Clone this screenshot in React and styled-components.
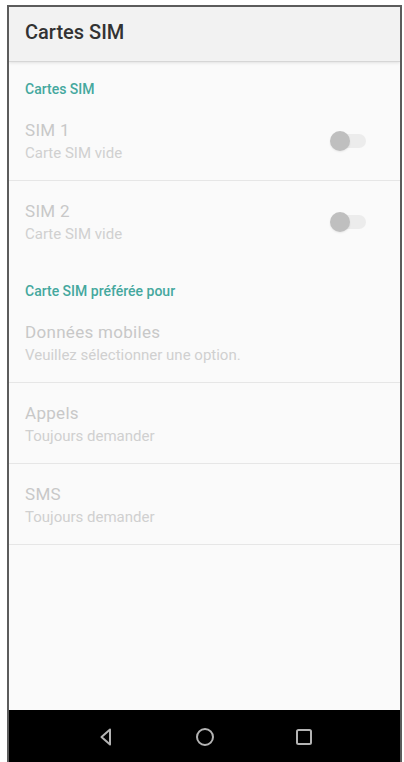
import React from "react";
import styled, { createGlobalStyle } from "styled-components";

const Global = createGlobalStyle`
  html, body { margin: 0; padding: 0; background: #ffffff; }
  body { font-family: Roboto, "Noto Sans", "Liberation Sans", sans-serif; }
  * { box-sizing: border-box; }
`;

const Frame = styled.div`
  margin: 5px 0 0 7px;
  width: 395px;
  height: 757px;
  border: 2px solid #5c5c5c;
  border-bottom: none;
  display: flex;
  flex-direction: column;
  overflow: hidden;
  background: #fafafa;
`;

const Header = styled.header`
  height: 55px;
  flex: none;
  background: #f2f2f2;
  border-bottom: 1px solid #d6d6d6;
  box-shadow: 0 1px 3px rgba(0, 0, 0, 0.1);
  padding: 13px 16px 0;
  position: relative;
  z-index: 1;
`;

const Title = styled.h1`
  margin: 0;
  font-size: 20px;
  line-height: 24px;
  font-weight: 500;
  color: #333333;
`;

const Content = styled.main`
  flex: 1;
  background: #fafafa;
`;

const Category = styled.div`
  padding: ${(p) => (p.$first ? "19px 16px 3px" : "23px 16px 3px")};
  font-size: 14px;
  line-height: 16px;
  font-weight: 500;
  color: #45a89e;
`;

const Row = styled.div`
  display: flex;
  align-items: center;
  padding: 20px 16px 16px;
  border-bottom: ${(p) => (p.$divider ? "1px solid #e6e6e6" : "none")};
  height: ${(p) => (p.$divider ? "81px" : "79px")};
`;

const Texts = styled.div`
  flex: 1;
  display: flex;
  flex-direction: column;
  gap: 4px;
  align-self: flex-start;
`;

const RowTitle = styled.div`
  font-size: 17px;
  line-height: 20px;
  letter-spacing: 0.3px;
  color: #c8c8c8;
`;

const RowSub = styled.div`
  font-size: 15px;
  line-height: 18px;
  color: #d0d0d0;
`;

const Switch = styled.div`
  position: relative;
  width: 36px;
  height: 20px;
  margin-right: 18px;
  margin-top: -2px;
  flex: none;
`;

const Track = styled.div`
  position: absolute;
  left: 4px;
  right: 0;
  top: 3px;
  height: 14px;
  border-radius: 7px;
  background: #ececec;
`;

const Thumb = styled.div`
  position: absolute;
  left: 0;
  top: 0;
  width: 20px;
  height: 20px;
  border-radius: 50%;
  background: #bfbfbf;
  box-shadow: 0 1px 2px rgba(0, 0, 0, 0.08);
`;

const Nav = styled.nav`
  height: 52px;
  flex: none;
  background: #000000;
  display: flex;
  align-items: center;
  justify-content: center;
  gap: 75px;
  padding-top: 2px;
`;

const NavIcon = styled.svg`
  width: 24px;
  height: 24px;
  display: block;
`;

const Item = ({ title, sub, toggle, divider }) => (
  <Row $divider={divider}>
    <Texts>
      <RowTitle>{title}</RowTitle>
      <RowSub>{sub}</RowSub>
    </Texts>
    {toggle && (
      <Switch>
        <Track />
        <Thumb />
      </Switch>
    )}
  </Row>
);

export default function App() {
  return (
    <>
      <Global />
      <Frame>
        <Header>
          <Title>Cartes SIM</Title>
        </Header>
        <Content>
          <Category $first>Cartes SIM</Category>
          <Item title="SIM 1" sub="Carte SIM vide" toggle divider />
          <Item title="SIM 2" sub="Carte SIM vide" toggle />
          <Category>Carte SIM préférée pour</Category>
          <Item title="Données mobiles" sub="Veuillez sélectionner une option." divider />
          <Item title="Appels" sub="Toujours demander" divider />
          <Item title="SMS" sub="Toujours demander" divider />
        </Content>
        <Nav>
          <NavIcon viewBox="0 0 24 24" fill="none" stroke="#b4b4b4" strokeWidth="2" strokeLinejoin="round">
            <path d="M16 4.5 L7.5 12 L16 19.5 Z" />
          </NavIcon>
          <NavIcon viewBox="0 0 24 24" fill="none" stroke="#b4b4b4" strokeWidth="2">
            <circle cx="12" cy="12" r="8" />
          </NavIcon>
          <NavIcon viewBox="0 0 24 24" fill="none" stroke="#b4b4b4" strokeWidth="2">
            <rect x="5" y="5" width="14" height="14" rx="1.5" />
          </NavIcon>
        </Nav>
      </Frame>
    </>
  );
}
